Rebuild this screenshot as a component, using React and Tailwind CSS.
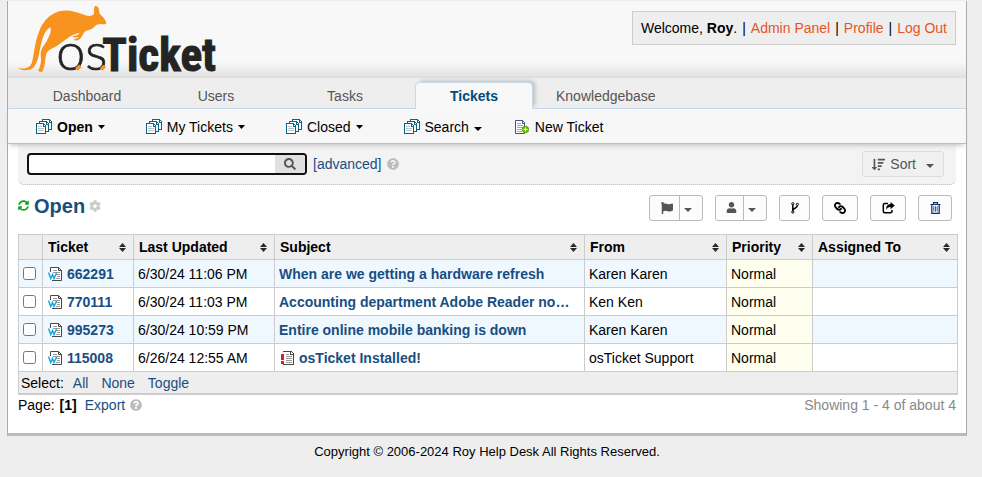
import React from "react";
import {
  FaCog,
  FaFlag,
  FaLink,
  FaQuestionCircle,
  FaSearch,
  FaSortAmountDown,
  FaSyncAlt,
  FaUser,
} from "react-icons/fa";

const tabs = ["Dashboard", "Users", "Tasks", "Tickets", "Knowledgebase"];

const queues = [
  { label: "Open", active: true },
  { label: "My Tickets" },
  { label: "Closed" },
  { label: "Search", large: true },
];

const columns = ["Ticket", "Last Updated", "Subject", "From", "Priority", "Assigned To"];

const tickets = [
  { id: "662291", updated: "6/30/24 11:06 PM", subject: "When are we getting a hardware refresh", from: "Karen Karen" },
  { id: "770111", updated: "6/30/24 11:03 PM", subject: "Accounting department Adobe Reader not opening", from: "Ken Ken" },
  { id: "995273", updated: "6/30/24 10:59 PM", subject: "Entire online mobile banking is down", from: "Karen Karen" },
  { id: "115008", updated: "6/26/24 12:55 AM", subject: "osTicket Installed!", from: "osTicket Support", alert: true },
];

function Logo() {
  return (
    <svg width="204" height="70" viewBox="48 12 612 210" role="img" aria-label="osTicket">
      <path
        fill="#f7931e"
        d="M51 203 C70 209 88 206 95 190 C102 168 103 130 117 95 C128 65 147 44 177 34 C205 27 225 35 246 42 C261 48 273 51 281 43 C284 36 280 26 284 19 C288 16 294 19 296 25 C298 32 297 38 300 43 C308 49 316 59 319 69 C317 74 311 74 305 72 C297 71 291 74 286 77 C280 85 270 90 259 92 C253 95 251 99 246 108 C241 119 231 124 221 120 C225 115 233 117 237 111 C232 111 223 116 216 109 C222 107 234 109 239 99 C227 100 220 104 209 110 C197 119 184 128 170 138 C157 146 144 150 140 159 C134 174 138 190 128 214 C123 217 117 216 115 211 C121 202 125 185 122 163 C122 143 135 135 142 119 C149 105 155 97 151 82 C138 88 130 105 124 129 C117 155 116 189 98 205 C84 215 64 211 51 203 Z"
      />
      <text x="169" y="211" fontFamily="Lato, sans-serif" fontWeight="300" fontSize="156" fill="#242424" stroke="#242424" strokeWidth="2">os</text>
      <text x="307" y="212" fontFamily="'Roboto Condensed', sans-serif" fontWeight="700" fontSize="136" fill="#242424" stroke="#242424" strokeWidth="3">Ticket</text>
      <path d="M229 208 L241 198 M303 208 L314 198" stroke="#f7931e" strokeWidth="11" />
    </svg>
  );
}

function QueueIcon() {
  return (
    <svg width="16" height="16" viewBox="0 0 16 16" className="shrink-0" aria-hidden="true" shapeRendering="crispEdges">
      <g fill="#fff" stroke="#0b6285">
        <path d="M6.5 .5 H13.5 L15.5 2.5 V10.5 H6.5 Z" />
        <path d="M3.5 2.5 H10.5 L12.5 4.5 V12.5 H3.5 Z" />
        <path d="M.5 4.5 H7.5 L9.5 6.5 V14.5 H.5 Z" />
        <path d="M7.5 4.5 V7.5 H9.5 M10.5 2.5 V5.5 H12.5 M13.5 .5 V3.5 H15.5" />
      </g>
      <path d="M2 7.5H6M2 9.5H8M2 11.5H8" stroke="#b5c3cb" />
    </svg>
  );
}

function NewTicketIcon() {
  return (
    <svg width="14" height="14" viewBox="0 0 14 14" className="shrink-0" aria-hidden="true">
      <path d="M.5 .5 H7.5 L9.5 2.5 V13.5 H.5 Z" fill="#fff" stroke="#41557f" />
      <path d="M7.5 .5 V3.5 H10" fill="none" stroke="#41557f" />
      <path d="M2 3.5H6M2 5.5H8M2 7.5H8M2 9.5H7M2 11.5H7" stroke="#7fb3d0" />
      <circle cx="10.5" cy="9.5" r="3.2" fill="#6cc100" stroke="#3f8a00" strokeWidth=".7" />
      <path d="M8.5 9.5H12.5M10.5 7.5V11.5" stroke="#fff" />
    </svg>
  );
}

function SourceIcon() {
  return (
    <svg width="15" height="14" viewBox="0 0 15 14" className="shrink-0" aria-hidden="true">
      <path d="M2.5 5 V.5 H10.5 L13.5 3.5 V13.5 H4" fill="#fff" stroke="#484848" />
      <path d="M10.5 .5 V3.5 H13.5" fill="none" stroke="#484848" />
      <path d="M5 3.5H9M5 5.5H12M8 7.5H12M9 9.5H12M8 11.5H12" stroke="#999" />
      <path d="M.5 5.5 L2.8 11.5 L4.5 7.5 L6 11.5 L8.5 6" fill="none" stroke="#18aae2" strokeWidth="1.5" />
    </svg>
  );
}

function AlertIcon() {
  return (
    <svg width="14" height="14" viewBox="0 0 14 14" className="shrink-0" aria-hidden="true" shapeRendering="crispEdges">
      <path d="M2 .5 H10.5 L12.5 2.5 V13.5 H2" fill="#fff" stroke="#484848" />
      <path d="M9.5 .5 V3.5 H12.5" fill="none" stroke="#484848" />
      <path d="M5 3.5H8M5 5.5H11M5 7.5H11M5 9.5H11M5 11.5H11" stroke="#999" />
      <path d="M0 3H3V9H0ZM0 10H3V13H0Z" fill="#e81c24" />
    </svg>
  );
}

function SortArrows() {
  return (
    <svg width="7" height="9" viewBox="0 0 7 9" className="shrink-0" aria-hidden="true">
      <path d="M0 4 L3.5 0 L7 4 Z M0 5 L3.5 9 L7 5 Z" fill="#222b2e" />
    </svg>
  );
}

function Caret({ large }) {
  return large ? (
    <svg width="8" height="4" viewBox="0 0 8 4" className="mt-1" aria-hidden="true"><path d="M0 0H8L4 4Z" fill="currentColor" /></svg>
  ) : (
    <svg width="7" height="4" viewBox="0 0 7 4" aria-hidden="true"><path d="M0 0H7L3.5 4Z" fill="currentColor" /></svg>
  );
}

function ForkIcon() {
  return (
    <svg width="10" height="12" viewBox="0 0 10 12" aria-hidden="true" fill="none" stroke="#000">
      <circle cx="2.8" cy="1.8" r="1.1" />
      <circle cx="7.4" cy="2.4" r="1.1" />
      <circle cx="2.8" cy="10" r="1.1" />
      <path d="M2.8 3V9M7.4 3.6C7.4 6.5 3.2 6 2.8 8.5" strokeWidth="1.5" />
    </svg>
  );
}

function ShareIcon() {
  return (
    <svg width="13" height="12" viewBox="0 0 13 12" aria-hidden="true">
      <path d="M6 1.5H2.8Q1.3 1.5 1.3 3V9.2Q1.3 10.7 2.8 10.7H8.5Q10 10.7 10 9.2V8" fill="none" stroke="#000" strokeWidth="1.5" />
      <path d="M8.6 0L12.8 3.6L8.6 7.2V5.1C6.5 5 5.2 5.8 4.6 8C3.6 4.5 5.4 2.2 8.6 2.1Z" fill="#000" />
    </svg>
  );
}

function TrashIcon() {
  return (
    <svg width="11" height="12" viewBox="0 0 11 12" aria-hidden="true" fill="none" stroke="#0c2c60">
      <path d="M.5 2.5H10.5M3.5 2.5V.7H7.5V2.5M1.8 2.5V11.3H9.2V2.5" strokeWidth="1.2" />
      <path d="M3.8 4.2V9.6M5.5 4.2V9.6M7.2 4.2V9.6" stroke="#2a62a8" />
    </svg>
  );
}

function ToolButton({ label, width, children }) {
  return (
    <button type="button" aria-label={label} className={`flex h-[26px] items-center justify-center rounded-[3px] border border-[#bbb] bg-[#fcfcfc] text-black ${width}`}>
      {children}
    </button>
  );
}

function SplitButton({ label, width, children }) {
  return (
    <button type="button" aria-label={label} className={`flex h-[26px] items-stretch rounded-[3px] border border-[#bbb] bg-[#fcfcfc] text-[#555] ${width}`}>
      <span className="flex flex-1 items-center justify-center border-r border-[#bbb] pl-1">{children}</span>
      <span className="flex w-[22px] items-center pl-1"><Caret large /></span>
    </button>
  );
}

function Header() {
  return (
    <header className="flex h-[76px] items-start justify-between bg-linear-to-b from-[#f8f8f8] from-80% to-[#e2e2e2] pr-[10px] pl-2">
      <a href="#home" className="mt-[3px]"><Logo /></a>
      <div className="mt-[10px] flex gap-[5px] border border-[#ccc] bg-[#eee] px-2 py-[6px] leading-5">
        <p>Welcome, <b>Roy</b>.</p>
        <span>|</span>
        <a href="#admin" className="text-[#e65524]">Admin Panel</a>
        <span>|</span>
        <a href="#profile" className="text-[#e65524]">Profile</a>
        <span>|</span>
        <a href="#logout" className="text-[#e65524]">Log Out</a>
      </div>
    </header>
  );
}

function Navigation() {
  return (
    <>
      <nav className="flex h-8 items-end gap-[11px] border-t border-b border-t-[#ddd] border-b-[#c5d9ec] bg-[#eee] pl-5">
        {tabs.map((tab) => (
          <a
            key={tab}
            href={`#${tab}`}
            className={
              tab === "Tickets"
                ? "-mb-px h-[27px] min-w-[118px] rounded-t-[5px] border border-b-0 border-[#c5d9ec] bg-[#f8f8f8] px-3 text-center leading-[26px] font-bold text-[#004a80] shadow-[3px_-2px_4px_-1px_#bbb]"
                : "h-[26px] min-w-[118px] px-3 text-center leading-7 text-[#555]"
            }
          >
            {tab}
          </a>
        ))}
      </nav>
      <nav className="relative flex h-[35px] items-center gap-[41px] border-b border-[#bebebe] bg-[#f7f7f7] pt-[2px] pl-7 shadow-[0_3px_5px_-2px_#bbb]">
        {queues.map((queue) => (
          <a key={queue.label} href={`#${queue.label}`} className="flex items-center gap-[5px] text-black">
            <QueueIcon />
            <span className={queue.active ? "font-bold" : ""}>{queue.label}</span>
            <Caret large={queue.large} />
          </a>
        ))}
        <a href="#new" className="-ml-2 flex items-center gap-[6px] text-black">
          <NewTicketIcon />
          New Ticket
        </a>
      </nav>
    </>
  );
}

function SearchPanel() {
  return (
    <section className="flex h-[41px] items-center justify-between rounded-b-[6px] border-b border-dotted border-[#bbb] bg-[#f3f3f3] pr-3 pl-[9px]">
      <form className="flex items-center">
        <div className="flex h-[22px] w-[280px] overflow-hidden rounded-[4px] border-2 border-[#101010] bg-white">
          <input type="text" aria-label="Search tickets" className="min-w-0 flex-1 px-1 outline-none" />
          <button type="button" aria-label="Search" className="flex w-[30px] items-center justify-center bg-[#e0e0e0] text-[#555]">
            <FaSearch size={12} />
          </button>
        </div>
        <a href="#advanced" className="ml-[6px] text-[#184e81]">[advanced]</a>
        <FaQuestionCircle size={12} className="ml-[5px] text-[#bbb]" />
      </form>
      <button type="button" className="flex h-[26px] items-center rounded-[3px] border border-[#ddd] bg-[#f0f0f0] px-[9px] text-[#555]">
        <FaSortAmountDown size={13} className="mr-[5px]" />
        Sort
        <span className="ml-[10px]"><Caret large /></span>
      </button>
    </section>
  );
}

function TitleBar() {
  return (
    <section className="mb-1 flex h-[45px] items-center justify-between pr-[6px]">
      <h1 className="flex items-center pb-1 text-[20px] leading-6 font-bold text-[#184e81]">
        <FaSyncAlt size={11} className="mr-[5px] text-[#0aa816]" />
        Open
        <FaCog size={12} className="ml-1 text-[#ccc]" />
      </h1>
      <div className="flex gap-3">
        <SplitButton label="Priority" width="w-[54px]"><FaFlag size={12} /></SplitButton>
        <SplitButton label="Assign" width="w-[52px]"><FaUser size={11} /></SplitButton>
        <ToolButton label="Transfer" width="w-[31px]"><ForkIcon /></ToolButton>
        <ToolButton label="Merge" width="w-[36px]"><FaLink size={12} className="rotate-90" /></ToolButton>
        <ToolButton label="Share" width="w-[36px]"><ShareIcon /></ToolButton>
        <ToolButton label="Delete" width="w-[34px]"><TrashIcon /></ToolButton>
      </div>
    </section>
  );
}

function TicketTable() {
  return (
    <table className="w-full table-fixed border-collapse border border-b-2 border-[#ccc]">
      <colgroup>
        <col className="w-[24px]" />
        <col className="w-[91px]" />
        <col className="w-[141px]" />
        <col />
        <col className="w-[142px]" />
        <col className="w-[86px]" />
        <col className="w-[145px]" />
      </colgroup>
      <thead>
        <tr className="h-[25px] bg-[#eee]">
          <th className="border border-[#ccc]" />
          {columns.map((column) => (
            <th key={column} className="border border-[#ccc] pr-[7px] pl-[5px] text-left font-bold">
              <span className="flex items-center justify-between">{column}<SortArrows /></span>
            </th>
          ))}
        </tr>
      </thead>
      <tbody>
        {tickets.map((ticket) => (
          <tr key={ticket.id} className="h-[28px] odd:bg-[#f0f8ff]">
            <td className="border border-[#ccc] pl-1">
              <input type="checkbox" aria-label={`Select ticket ${ticket.id}`} className="block size-[13px]" />
            </td>
            <td className="border border-[#ccc] pl-[5px]">
              <a href={`#${ticket.id}`} className="flex items-center gap-1 font-bold text-[#184e81]"><SourceIcon />{ticket.id}</a>
            </td>
            <td className="border border-[#ccc] pl-1 whitespace-nowrap">{ticket.updated}</td>
            <td className="border border-[#ccc] pr-3 pl-1">
              <div className="flex items-center gap-1">
                {ticket.alert && <span className="pl-[2px]"><AlertIcon /></span>}
                <a href={`#${ticket.id}`} className="truncate font-bold text-[#184e81]">{ticket.subject}</a>
              </div>
            </td>
            <td className="border border-[#ccc] pl-1">{ticket.from}</td>
            <td className="border border-[#ccc] bg-[#fffff0] pl-1">Normal</td>
            <td className="border border-[#ccc]" />
          </tr>
        ))}
      </tbody>
      <tfoot>
        <tr className="h-[22px] bg-[#eee]">
          <td colSpan={7} className="pt-px pl-[2px]">
            <span className="flex leading-5">
              Select:
              <a href="#all" className="ml-[9px] text-[#184e81]">All</a>
              <a href="#none" className="ml-[13px] text-[#184e81]">None</a>
              <a href="#toggle" className="ml-[13px] text-[#184e81]">Toggle</a>
            </span>
          </td>
        </tr>
      </tfoot>
    </table>
  );
}

export default function App() {
  return (
    <div className="min-h-screen bg-[#eee] pt-px pr-[15px] pl-[7px] font-['Liberation_Sans',Arial,sans-serif] text-[14px] leading-5 text-black">
      <div className="border-x border-b-3 border-x-[#aaa] border-b-[#bbb] bg-white">
        <Header />
        <Navigation />
        <main className="pr-2 pb-[18px] pl-[10px]">
          <div className="pr-[2px]"><SearchPanel /></div>
          <TitleBar />
          <TicketTable />
          <div className="flex justify-between pr-[2px]">
            <p className="flex items-center">
              Page: <b className="ml-[5px]">[1]</b>
              <a href="#export" className="ml-2 text-[#184e81]">Export</a>
              <FaQuestionCircle size={12} className="ml-[5px] text-[#bbb]" />
            </p>
            <p className="text-[#888]">Showing 1 - 4 of about 4</p>
          </div>
        </main>
      </div>
      <footer className="py-[6px] text-center text-[13px] leading-5">Copyright © 2006-2024 Roy Help Desk All Rights Reserved.</footer>
    </div>
  );
}
